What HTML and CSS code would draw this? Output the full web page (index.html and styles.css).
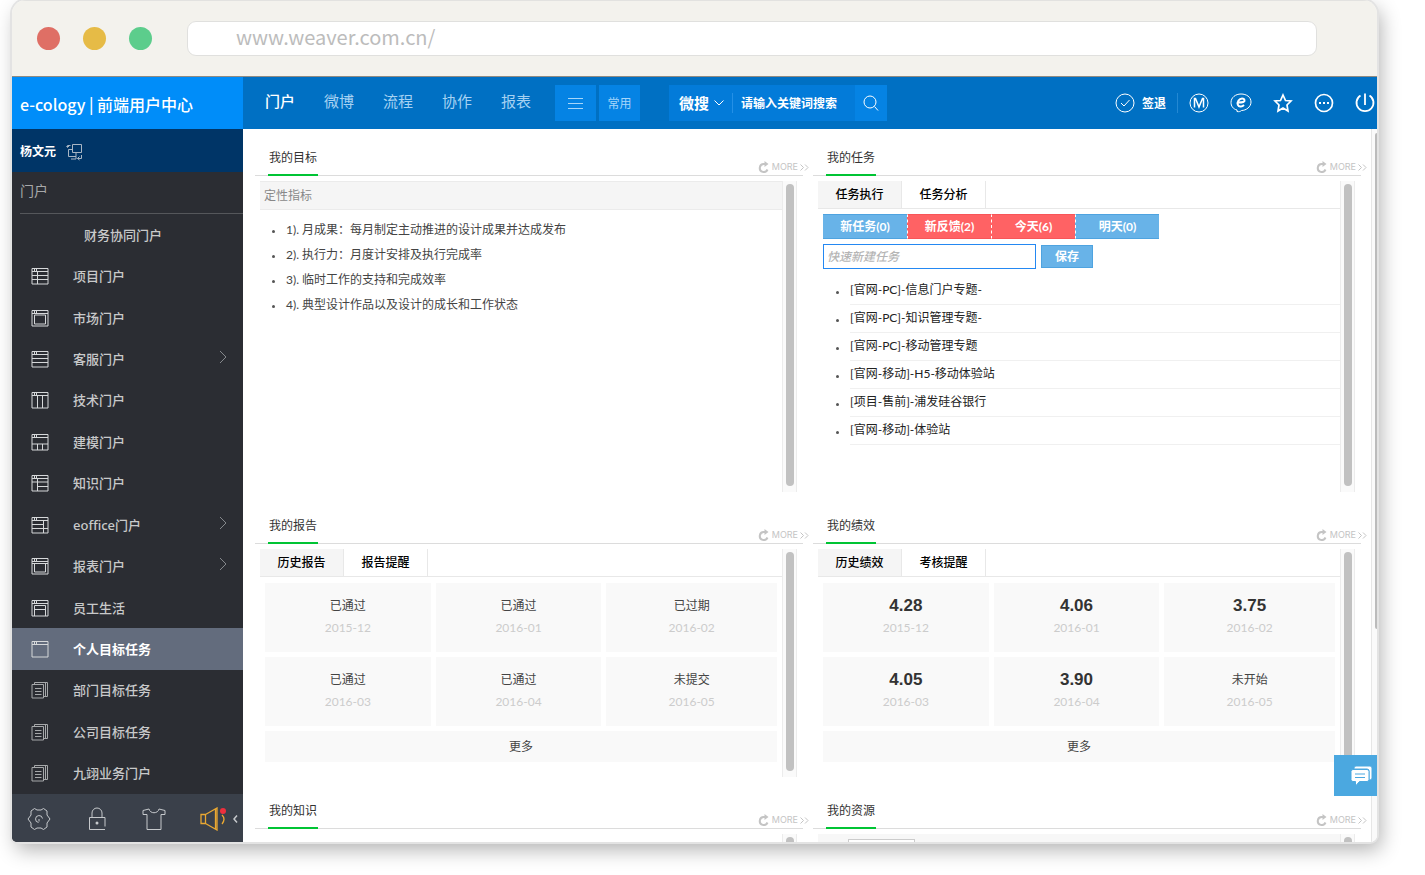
FILE: index.html
```html
<!DOCTYPE html>
<html lang="zh-CN">
<head>
<meta charset="utf-8">
<title>e-cology | 前端用户中心</title>
<link rel="stylesheet" href="styles.css">
</head>
<body>
<svg class="defs" aria-hidden="true">
  <symbol id="frame" viewBox="0 0 18 18"><path d="M1 1.5h16v15.5H1zM1 4.500h16M3.500 1.500v3M5.500 1.500v3"/></symbol>
  <symbol id="doc" viewBox="0 0 18 18"><path d="M1 3.500h11.500v13.500H1zM3.500 3.500V1.500h13v14h-4M14.500 1.500v14M4 7.500h6.500M4 10.500h6.500M4 13.500h6.500"/></symbol>
  <symbol id="chev" viewBox="0 0 8 14"><path d="M1 1l6 6-6 6"/></symbol>
  <symbol id="reload" viewBox="0 0 12 12"><path d="M9.500 8.500A4 4 0 1 1 6 3h3" stroke-width="2"/><path d="M6.500 0l4 3-4 3z" class="solid"/></symbol>
</svg>
<div class="window">
  <div class="chrome">
    <i class="dot red"></i><i class="dot amber"></i><i class="dot green"></i>
    <input class="address" type="text" aria-label="网址" value="www.weaver.com.cn/">
  </div>
  <div class="app">
    <aside class="side">
      <h1 class="brand">e-cology | 前端用户中心</h1>
      <div class="user">杨文元
        <svg class="ico" width="18" height="18" viewBox="0 0 18 18"><path d="M6.500 1.500h9v8h-9zM6.500 6.500h-4v7h7.500v-4M1.500 4V2.500h3M.5 3l1 1.500L3 3M5 16h5v-2.500M15.500 12v3.500h-4M13.500 13.500l-2 2 2 1.500"/></svg>
      </div>
      <h2 class="portal">门户</h2>
      <nav class="menu">
        <a href="#" class="sub">财务协同门户</a>
        <a href="#"><svg class="ico" viewBox="0 0 18 18"><use href="#frame"/><path d="M6.500 5v12M1 8.500h16M1 12.500h16"/></svg>项目门户</a>
        <a href="#"><svg class="ico" viewBox="0 0 18 18"><use href="#frame"/><path d="M3.500 6h11v9h-11z"/></svg>市场门户</a>
        <a href="#"><svg class="ico" viewBox="0 0 18 18"><use href="#frame"/><path d="M1 8.500h16M1 12.500h16"/></svg>客服门户<svg class="arrow"><use href="#chev"/></svg></a>
        <a href="#"><svg class="ico" viewBox="0 0 18 18"><use href="#frame"/><path d="M6.500 5v12M11.500 5v12"/></svg>技术门户</a>
        <a href="#"><svg class="ico" viewBox="0 0 18 18"><use href="#frame"/><path d="M1 11h16M6.500 11v6M11.500 11v6"/></svg>建模门户</a>
        <a href="#"><svg class="ico" viewBox="0 0 18 18"><use href="#frame"/><path d="M6.500 5v12M1 8h16M6.500 12.500H17"/></svg>知识门户</a>
        <a href="#"><svg class="ico" viewBox="0 0 18 18"><use href="#frame"/><path d="M12.500 5v12M1 8.500h11.500M1 12.500h16"/></svg>eoffice门户<svg class="arrow"><use href="#chev"/></svg></a>
        <a href="#"><svg class="ico" viewBox="0 0 18 18"><use href="#frame"/><path d="M1 6.500h16M3.500 6.500V15h11V6.500"/></svg>报表门户<svg class="arrow"><use href="#chev"/></svg></a>
        <a href="#"><svg class="ico" viewBox="0 0 18 18"><use href="#frame"/><path d="M3.500 17V6.500h11V17M3.500 10.500h11"/></svg>员工生活</a>
        <a href="#" class="on"><svg class="ico" viewBox="0 0 18 18"><use href="#frame"/></svg>个人目标任务</a>
        <a href="#"><svg class="ico dim" viewBox="0 0 18 18"><use href="#doc"/></svg>部门目标任务</a>
        <a href="#"><svg class="ico dim" viewBox="0 0 18 18"><use href="#doc"/></svg>公司目标任务</a>
        <a href="#"><svg class="ico dim" viewBox="0 0 18 18"><use href="#doc"/></svg>九翊业务门户</a>
      </nav>
      <div class="tools">
        <button aria-label="设置"><svg width="24" height="24" viewBox="0 0 24 24"><path d="M7.500 1.500l2.500 1.500h4l2.500-1.500 3.500 2.500v4l3 4-3 4v4l-3.500 2.500L14 21h-4l-2.500 1.500L4 20v-4l-3-4 3-4V4z" stroke-linejoin="round"/><path d="M11.500 15.500a3.500 3.500 0 1 1 4-4M12 12v2.500"/></svg></button>
        <button aria-label="锁定"><svg width="24" height="24" viewBox="0 0 24 24"><path d="M20 22.500H4.500V10.500h15.500v9M7 10.500V6a5 5 0 0 1 10 0v4.500"/><circle class="solid" cx="12" cy="16" r="1.500"/></svg></button>
        <button aria-label="主题"><svg width="24" height="24" viewBox="0 0 24 24"><path d="M1 7.500V3.500L7 2c1 5 9 5 10 0l6 1.500v4h-4V22.500H5V7.500z"/></svg></button>
        <button class="horn" aria-label="公告"><svg width="28" height="24" viewBox="0 0 28 24"><path d="M1 7.500h4.500v9H1zM5.500 7.500L17 1v22L5.500 16.500M15.500 2v20M22 8q4 4 0 9" stroke-width="1.300"/></svg></button>
        <button class="fold" aria-label="收起"><svg width="5" height="8" viewBox="0 0 5 8"><path d="M4 .5L1 4l3 3.500" stroke-width="1.500"/></svg></button>
      </div>
    </aside>
    <div class="main">
      <header class="top">
        <nav class="tabs-top"><a href="#" class="cur">门户</a><a href="#">微博</a><a href="#">流程</a><a href="#">协作</a><a href="#">报表</a></nav>
        <button class="quick" aria-label="菜单"><svg width="16" height="12" viewBox="0 0 16 12"><path d="M0 1.500h15M0 6.500h15M0 11.500h15"/></svg></button>
        <button class="quick">常用</button>
        <form class="search">
          <button type="button" class="kind">微搜<svg width="10" height="6" viewBox="0 0 10 6"><path d="M.5.5L5 5 9.500.5"/></svg></button>
          <input type="text" aria-label="搜索" placeholder="请输入关键词搜索">
          <button type="button" class="go" aria-label="搜索"><svg width="16" height="16" viewBox="0 0 16 16"><circle cx="7" cy="7" r="6"/><path d="M11.500 11.500l3.500 4"/></svg></button>
        </form>
        <div class="actions">
          <button class="sign"><svg width="20" height="20" viewBox="0 0 20 20"><circle cx="10" cy="10" r="9"/><path d="M6 10l3 3 5.500-6"/></svg>签退</button>
          <button aria-label="M"><svg width="20" height="20" viewBox="0 0 20 20"><circle cx="10" cy="10" r="9"/><path d="M5.500 14.500v-9h1L10 14l3.500-8.500h1v9" stroke-width="1.500"/></svg></button>
          <button aria-label="e-message"><svg width="22" height="20" viewBox="0 0 22 20"><path d="M7 18.500v-1.500C3 16 1 13 1 9.500 1 4.500 5.500 1 11 1s10 3 10 8-5 8.500-9.500 8.500C10.500 18.500 9 19 7 18.500z"/><path d="M8 9.500c5 0 7-.5 6.500-2.500s-4-2.500-6 .5-.5 6.500 2.500 6c1.500 0 2.500-1 3-1.500" stroke-width="2"/></svg></button>
          <button aria-label="收藏"><svg width="20" height="20" viewBox="0 0 20 20"><path d="M10 2l2.500 5.500 5.500.5-4 4 1 6-5-3-5 3 1-6-4-4 5.500-.5z" stroke-width="1.700"/></svg></button>
          <button aria-label="更多"><svg width="20" height="20" viewBox="0 0 20 20"><circle cx="10" cy="10" r="8.500" stroke-width="1.700"/><path d="M5 10h2M9 10h2M13 10h2" stroke-width="2"/></svg></button>
          <button aria-label="退出"><svg width="20" height="20" viewBox="0 0 20 20"><path d="M5.500 2.500a8.500 8.500 0 1 0 9 0M10 .5V12" stroke-width="1.800"/></svg></button>
        </div>
      </header>
      <div class="stage">
        <section class="panel">
          <div class="head"><h3>我的目标</h3><a class="more" href="#"><svg width="12" height="12"><use href="#reload"/></svg>MORE<svg width="9" height="7" viewBox="0 0 9 7"><path d="M.5.5l3 3-3 3M5 .5l3 3-3 3"/></svg></a></div>
          <div class="body tall">
            <div class="inner">
              <div class="caption">定性指标</div>
              <ul class="goals">
                <li>1). 月成果：每月制定主动推进的设计成果并达成发布</li>
                <li>2). 执行力：月度计安排及执行完成率</li>
                <li>3). 临时工作的支持和完成效率</li>
                <li>4). 典型设计作品以及设计的成长和工作状态</li>
              </ul>
            </div>
            <div class="track"><i></i></div>
          </div>
        </section>
        <section class="panel">
          <div class="head"><h3>我的任务</h3><a class="more" href="#"><svg width="12" height="12"><use href="#reload"/></svg>MORE<svg width="9" height="7" viewBox="0 0 9 7"><path d="M.5.5l3 3-3 3M5 .5l3 3-3 3"/></svg></a></div>
          <div class="body tall">
            <div class="inner">
              <div class="tabs"><button class="sel">任务执行</button><button>任务分析</button></div>
              <div class="filters"><button>新任务(0)</button><button class="hot">新反馈(2)</button><button class="hot">今天(6)</button><button>明天(0)</button></div>
              <form class="quickadd"><input type="text" aria-label="快速新建任务" placeholder="快速新建任务"><button type="button">保存</button></form>
              <ul class="tasks">
                <li><a href="#">[官网-PC]-信息门户专题-</a></li>
                <li><a href="#">[官网-PC]-知识管理专题-</a></li>
                <li><a href="#">[官网-PC]-移动管理专题</a></li>
                <li><a href="#">[官网-移动]-H5-移动体验站</a></li>
                <li><a href="#">[项目-售前]-浦发硅谷银行</a></li>
                <li><a href="#">[官网-移动]-体验站</a></li>
              </ul>
            </div>
            <div class="track"><i></i></div>
          </div>
        </section>
        <section class="panel">
          <div class="head"><h3>我的报告</h3><a class="more" href="#"><svg width="12" height="12"><use href="#reload"/></svg>MORE<svg width="9" height="7" viewBox="0 0 9 7"><path d="M.5.5l3 3-3 3M5 .5l3 3-3 3"/></svg></a></div>
          <div class="body">
            <div class="inner">
              <div class="tabs"><button class="sel">历史报告</button><button>报告提醒</button></div>
              <div class="cards">
                <div class="card"><span>已通过</span><time>2015-12</time></div>
                <div class="card"><span>已通过</span><time>2016-01</time></div>
                <div class="card"><span>已过期</span><time>2016-02</time></div>
                <div class="card"><span>已通过</span><time>2016-03</time></div>
                <div class="card"><span>已通过</span><time>2016-04</time></div>
                <div class="card"><span>未提交</span><time>2016-05</time></div>
                <button class="all">更多</button>
              </div>
            </div>
            <div class="track"><i></i></div>
          </div>
        </section>
        <section class="panel">
          <div class="head"><h3>我的绩效</h3><a class="more" href="#"><svg width="12" height="12"><use href="#reload"/></svg>MORE<svg width="9" height="7" viewBox="0 0 9 7"><path d="M.5.5l3 3-3 3M5 .5l3 3-3 3"/></svg></a></div>
          <div class="body">
            <div class="inner">
              <div class="tabs"><button class="sel">历史绩效</button><button>考核提醒</button></div>
              <div class="cards">
                <div class="card"><b>4.28</b><time>2015-12</time></div>
                <div class="card"><b>4.06</b><time>2016-01</time></div>
                <div class="card"><b>3.75</b><time>2016-02</time></div>
                <div class="card"><b>4.05</b><time>2016-03</time></div>
                <div class="card"><b>3.90</b><time>2016-04</time></div>
                <div class="card"><span>未开始</span><time>2016-05</time></div>
                <button class="all">更多</button>
              </div>
            </div>
            <div class="track"><i></i></div>
          </div>
        </section>
        <section class="panel">
          <div class="head"><h3>我的知识</h3><a class="more" href="#"><svg width="12" height="12"><use href="#reload"/></svg>MORE<svg width="9" height="7" viewBox="0 0 9 7"><path d="M.5.5l3 3-3 3M5 .5l3 3-3 3"/></svg></a></div>
          <div class="body"><div class="inner"></div><div class="track"><i></i></div></div>
        </section>
        <section class="panel">
          <div class="head"><h3>我的资源</h3><a class="more" href="#"><svg width="12" height="12"><use href="#reload"/></svg>MORE<svg width="9" height="7" viewBox="0 0 9 7"><path d="M.5.5l3 3-3 3M5 .5l3 3-3 3"/></svg></a></div>
          <div class="body"><div class="inner filterbar"><input type="text" aria-label="资源筛选"></div><div class="track"><i></i></div></div>
        </section>
        <div class="pagebar"><i></i></div>
        <button class="chat" aria-label="在线咨询"><svg width="24" height="22" viewBox="0 0 24 22"><path d="M6 1h14q2 0 2 2v10q0 2-2 2h-1V6q0-2-2-2H4V3q0-2 2-2z"/><path d="M3 4.500h14q2 0 2 2v8q0 2-2 2H9.500l-4 4.500v-4.500H3q-2 0-2-2v-8q0-2 2-2z"/><path d="M5 9h10M5 12.500h10" class="line"/></svg></button>
      </div>
    </div>
  </div>
</div>
</body>
</html>
```

FILE: styles.css
```css
* { box-sizing: border-box; }
body {
  margin: 0;
  height: 100vh;
  padding: 0 48px 33px 12px;
  background: #fff;
  overflow: hidden;
  font: 12px/20px Lato, "Noto Sans CJK SC", sans-serif;
  color: #444;
}
h1, h2, h3, ul { margin: 0; padding: 0; font-weight: 400; list-style: none; }
button, input { font: inherit; color: inherit; border: 0; padding: 0; margin: 0; background: none; outline: 0; }
a { color: inherit; text-decoration: none; }
svg { fill: none; stroke: currentColor; flex: none; }
.solid { fill: currentColor; stroke: none; }
.defs { position: absolute; width: 0; height: 0; }

.window {
  height: 100%;
  display: flex;
  flex-direction: column;
  border-radius: 14px 14px 7px 5px;
  overflow: hidden;
  box-shadow: 0 0 0 2px #e3e3e3, 4px 8px 20px 0 rgba(0, 0, 0, .3);
}
.chrome {
  flex: none;
  height: 77px;
  display: flex;
  align-items: center;
  gap: 23px;
  padding: 0 60px 0 25px;
  background: #f3f2ed;
  border-top: 1px solid #e2e2e0;
  border-bottom: 1px solid #8f8b82;
}
.dot { width: 23px; height: 23px; border-radius: 50%; }
.red { background: #df6f65; }
.amber { background: #e6bb46; }
.green { background: #5ccd8c; }
.address {
  flex: 1;
  height: 35px;
  margin-left: 12px;
  padding: 0 48px 4px;
  border: 1px solid #e0e0de;
  border-radius: 9px;
  background: #fff;
  color: #bcbcbc;
  font: 400 20px/30px "Noto Sans CJK SC", sans-serif;
}
.app { flex: 1; min-height: 0; display: flex; }

.side {
  flex: none;
  width: 231px;
  display: flex;
  flex-direction: column;
  background: #2b2d33;
  color: #c8c9ca;
  font-family: "Noto Sans", "Noto Sans CJK SC", sans-serif;
}
.brand { height: 52px; padding-left: 8px; background: #008df9; color: #fff; font: 500 16px/54px "Noto Sans CJK SC", sans-serif; }
.user { height: 43px; padding: 2px 0 0 8px; display: flex; align-items: center; gap: 10px; background: #003567; color: #fff; font-weight: 700; }
.user svg { stroke: #a9b6c4; }
.portal { height: 42px; margin-left: 8px; border-bottom: 1px solid #55575b; font-size: 14px; line-height: 38px; color: #a7a8a9; }
.menu { flex: 1; display: flex; flex-direction: column; }
.menu a { flex: 1; display: flex; align-items: center; padding: 0 16px 0 19px; font-size: 13px; font-weight: 500; }
.menu .sub { padding-left: 72px; }
.menu .on { background: #636c7d; color: #fff; font-weight: 700; }
.menu .ico { width: 18px; height: 18px; margin-right: 24px; stroke: #d6d8da; }
.menu .dim { stroke: #a6a8aa; }
.menu .arrow { width: 8px; height: 14px; margin: 0 0 4px auto; stroke: #85888c; }
.tools { height: 48px; display: flex; align-items: center; justify-content: space-between; padding: 2px 5px 0 15px; background: #3a404a; color: #c6c9cc; }
.tools button { display: flex; }
.horn { position: relative; color: #eaa832; }
.horn::after { content: ""; position: absolute; right: 2px; top: 1px; width: 6px; height: 6px; border-radius: 50%; background: #ee2f3d; }
.tools .horn { margin-right: -28px; }

.main { flex: 1; min-width: 0; display: flex; flex-direction: column; background: #fff; }
.top { flex: none; height: 52px; display: flex; align-items: center; padding-left: 22px; background: #0070c3; color: #fff; overflow: hidden; font-family: "Noto Sans CJK SC", sans-serif; }
.tabs-top { display: flex; gap: 29px; padding-bottom: 4px; margin-right: 24px; font-size: 15px; color: #a6d2f2; }
.tabs-top .cur { color: #fff; font-weight: 500; }
.quick { width: 41px; height: 36px; margin-right: 3px; display: flex; align-items: center; justify-content: center; background: #0583e4; color: #a6d6fa; }
.search { height: 36px; width: 218px; margin-left: 26px; display: flex; align-items: center; background: #037bd9; font-weight: 700; }
.kind { width: 64px; padding-left: 10px; display: flex; align-items: center; gap: 5px; font-size: 15px; border-right: 1px solid #2490e6; }
.search input { flex: 1; min-width: 0; padding-left: 8px; font-weight: 700; }
.search input::placeholder { color: #fff; }
.go { width: 32px; height: 36px; display: flex; align-items: center; justify-content: center; background: #0583e4; }
.actions { margin-left: auto; display: flex; align-items: center; gap: 21px; margin-right: 2px; }
.actions button { display: flex; align-items: center; }
.actions .sign { gap: 7px; font-weight: 700; padding-right: 11px; border-right: 1px solid #2388d3; margin-right: -10px; }

.stage {
  position: relative;
  flex: 1;
  min-height: 0;
  overflow: hidden;
  display: grid;
  grid-template-columns: 1fr 1fr;
  grid-auto-rows: max-content;
  column-gap: 10px;
  padding: 0 16px 0 12px;
}
.panel { min-width: 0; padding-bottom: 5px; }
.head { height: 47px; margin-bottom: 5px; padding-left: 13px; display: flex; align-items: flex-end; justify-content: space-between; border-bottom: 1px solid #dcdcdc; }
.head h3 { min-width: 50px; height: 31px; margin-bottom: -1px; border-bottom: 2px solid #00c434; font-size: 12px; line-height: 26px; text-align: center; color: #333; }
.more { display: flex; align-items: center; gap: 2px; margin-right: -6px; color: #c4c4c4; font: 9px/16px Inter, sans-serif; }
.body { display: flex; height: 228px; padding: 0 6px 0 5px; }
.tall { height: 311px; }
.inner { flex: 1; min-width: 0; }
.track { width: 15px; padding: 3px 2px 6px 3px; background: #fafafa; border: solid #ececec; border-width: 0 1px; }
.track i { display: block; height: 100%; border-radius: 5px; background: #c1c1c1; }
.caption { height: 29px; padding-left: 4px; line-height: 28px; background: #f5f5f5; border: solid #ebebeb; border-width: 1px 0; color: #888; }
.goals { padding: 7px 0 0 12px; line-height: 25px; }
.goals li, .tasks li { display: flex; align-items: center; gap: 11px; }
.goals li::before, .tasks li::before { content: ""; width: 3px; height: 3px; margin-top: 3px; border-radius: 50%; background: #555; }
.tabs { display: flex; height: 28px; border-bottom: 1px solid #e8e8e8; }
.tabs button { width: 84px; border-right: 1px solid #e8e8e8; color: #000; font-weight: 500; }
.tabs .sel { background: #f5f5f5; }
.filters { display: flex; padding: 5px 5px 0; }
.filters button { width: 84px; height: 25px; background: #68b3e8; border: solid #4ea3e0; border-width: 1px 0; color: #fff; font-weight: 700; }
.filters button + button { border-left: 1px dashed #fff; }
.filters .hot { background: #ff6264; border-top-color: #f85558; border-bottom-color: #f85558; }
.quickadd { display: flex; align-items: center; gap: 5px; padding: 5px 5px 0; }
.quickadd input { width: 213px; height: 25px; padding: 0 3px; border: 1px solid #2488f2; font-style: italic; }
.quickadd input::placeholder { color: #b5b5b5; font-weight: 500; }
.quickadd button { width: 52px; height: 23px; background: #68b3e8; border: 1px solid #4ea3e0; color: #fff; font-weight: 700; }
.tasks { padding: 8px 0 0 18px; }
.tasks a { flex: 1; height: 28px; line-height: 26px; border-bottom: 1px solid #f0f0f0; color: #222; }
.cards { display: grid; grid-template-columns: 33fr 33fr 34fr; gap: 5px; padding: 6px 5px 0; text-align: center; }
.card { height: 69px; padding-top: 12px; background: #f9f9f9; display: flex; flex-direction: column; line-height: 22px; }
.card time { color: #ccc; }
.card b { font: 700 17px/22px "Liberation Sans", sans-serif; color: #333; }
.all { grid-column: 1 / -1; height: 31px; background: #f9f9f9; }
.filterbar { padding: 5px 30px; background: #f7f7f7; }
.filterbar input { width: 67px; height: 22px; border: 1px solid #ccc; background: #fff; }
.pagebar { position: absolute; right: 0; top: 0; bottom: 0; width: 6px; padding: 4px 0 0 3px; border-left: 1px solid #e6e6e6; background: #fafafa; }
.pagebar i { display: block; height: 70%; border-radius: 5px 0 0 5px; background: #bbb; }
.chat { position: absolute; right: 0; bottom: 46px; width: 43px; height: 41px; padding-left: 16px; display: flex; align-items: center; background: #4ba8e0; }
.chat svg { fill: #fff; stroke: #4ba8e0; stroke-width: 1; }
.chat .line { stroke: #4ba8e0; }
```
